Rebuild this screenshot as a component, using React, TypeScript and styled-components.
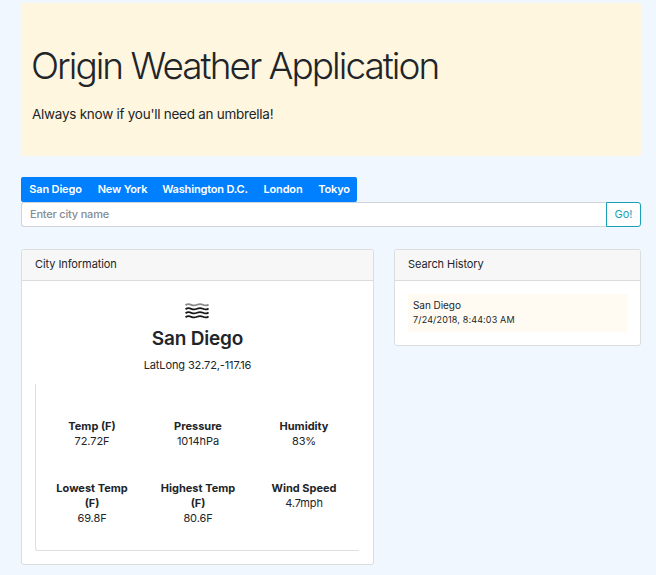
import React from "react";
import styled, { createGlobalStyle } from "styled-components";

const GlobalStyle = createGlobalStyle`
  * { box-sizing: border-box; }
  body {
    margin: 0;
    background: #f0f7ff;
    color: #212529;
    font-family: Inter, "Liberation Sans", sans-serif;
    font-size: 11px;
    line-height: 15px;
  }
  h1, h2, p, dl, dt, dd { margin: 0; }
`;

const Page = styled.main`
  width: 656px;
  height: 575px;
  overflow: hidden;
  padding: 3px 15px 0 21px;
`;

const Banner = styled.header`
  height: 153px;
  padding: 41px 11px 0;
  border-radius: 3px;
  background: #fff6df;
`;

const Title = styled.h1`
  margin-left: -1px;
  font-size: 37px;
  line-height: 44px;
  font-weight: 340;
  letter-spacing: -1.99px;
  white-space: nowrap;
`;

const Tagline = styled.p`
  margin-top: 16px;
  font-size: 13.5px;
  line-height: 21px;
  font-weight: 400;
  letter-spacing: -0.26px;
`;

const CityButtons = styled.nav`
  display: flex;
  width: 336px;
  margin-top: 21px;
  border-radius: 2px;
  overflow: hidden;
  background: #007fff;
`;

const CityButton = styled.button<{ $width: number }>`
  width: ${({ $width }) => $width}px;
  height: 25px;
  padding: 0;
  border: 0;
  background: transparent;
  color: #fff;
  font: 600 11px/25px Inter, sans-serif;
  letter-spacing: -0.17px;
  white-space: nowrap;
`;

const SearchBar = styled.form`
  display: flex;
  height: 25px;
`;

const SearchInput = styled.input`
  flex: 1;
  min-width: 0;
  padding: 0 8px;
  border: 1px solid #ced4da;
  border-right: 0;
  border-radius: 3px 0 0 3px;
  background: #fff;
  color: #495057;
  font: 500 11px/15px Inter, sans-serif;
  letter-spacing: -0.2px;
  &::placeholder { color: #858c93; opacity: 1; }
`;

const GoButton = styled.button`
  width: 35px;
  padding: 0;
  border: 1px solid #17a2b8;
  border-radius: 0 3px 3px 0;
  background: #fff;
  color: #17a2b8;
  font: 400 11px/15px Inter, sans-serif;
`;

const Columns = styled.div`
  display: grid;
  grid-template-columns: 353px 247px;
  gap: 20px;
  align-items: start;
  margin-top: 22px;
`;

const Card = styled.section`
  border: 1px solid #dcdddf;
  border-radius: 3px;
  background: #fff;
`;

const CardHeader = styled.header`
  height: 31px;
  padding: 7px 13px;
  border-bottom: 1px solid #dadbdc;
  border-radius: 2px 2px 0 0;
  background: #f7f7f7;
  letter-spacing: -0.08px;
`;

const CityBody = styled.div`
  height: 283px;
  padding: 22px 13px 0;
  text-align: center;
`;

const MistIcon = styled.svg`
  display: block;
  width: 24px;
  height: 16px;
  margin: 0 auto;
  transform: translateX(-1px);
`;

const CityName = styled.h2`
  margin-top: 8px;
  font-size: 19px;
  line-height: 24px;
  font-weight: 570;
  letter-spacing: -0.2px;
`;

const Coordinates = styled.p`
  margin-top: 7px;
  font-weight: 370;
  letter-spacing: -0.12px;
`;

const Readings = styled.dl`
  display: grid;
  grid-template-columns: repeat(3, 106px);
  grid-template-rows: 62px 1fr;
  width: 324px;
  height: 167px;
  margin-top: 11px;
  padding: 35px 0 0 3px;
  border-left: 1px solid #dfdfdf;
  border-bottom: 1px solid #dfdfdf;
  border-radius: 0 0 0 3px;
`;

const Reading = styled.div`
  padding: 0 13px;
`;

const ReadingLabel = styled.dt`
  font-weight: 650;
`;

const ReadingValue = styled.dd`
  font-weight: 370;
  letter-spacing: -0.1px;
`;

const HistoryBody = styled.div`
  padding: 13px;
`;

const HistoryEntry = styled.div`
  height: 38px;
  padding: 4px 5px;
  background: #fffaf2;
`;

const HistoryCity = styled.div`
  font-size: 10px;
  letter-spacing: -0.05px;
`;

const Timestamp = styled.time`
  display: block;
  font-size: 9px;
  line-height: 13px;
  letter-spacing: 0.15px;
`;

const cities = [
  { name: "San Diego", width: 69 },
  { name: "New York", width: 65 },
  { name: "Washington D.C.", width: 100 },
  { name: "London", width: 56 },
  { name: "Tokyo", width: 46 },
];

const readings = [
  ["Temp (F)", "72.72F"],
  ["Pressure", "1014hPa"],
  ["Humidity", "83%"],
  ["Lowest Temp (F)", "69.8F"],
  ["Highest Temp (F)", "80.6F"],
  ["Wind Speed", "4.7mph"],
];

const wave = "M0.5 2.2 C2.5 .8 4 .8 6.3 1.8 S10 2.8 12 1.8 S16 .8 18 1.8 S22 2.5 23.5 1.4";

export default function App() {
  return (
    <>
      <GlobalStyle />
      <Page>
        <Banner>
          <Title>Origin Weather Application</Title>
          <Tagline>Always know if you'll need an umbrella!</Tagline>
        </Banner>
        <CityButtons>
          {cities.map(({ name, width }) => (
            <CityButton key={name} $width={width}>{name}</CityButton>
          ))}
        </CityButtons>
        <SearchBar onSubmit={(event) => event.preventDefault()}>
          <SearchInput placeholder="Enter city name" />
          <GoButton>Go!</GoButton>
        </SearchBar>
        <Columns>
          <Card>
            <CardHeader>City Information</CardHeader>
            <CityBody>
              <MistIcon viewBox="0 0 24 16" fill="none" stroke="#181818" strokeWidth="1.8">
                <path d={wave} stroke="#888" />
                <path d={wave} transform="translate(0 4)" />
                <path d={wave} transform="translate(0 8)" />
                <path d={wave} transform="translate(0 12)" />
              </MistIcon>
              <CityName>San Diego</CityName>
              <Coordinates>LatLong 32.72,-117.16</Coordinates>
              <Readings>
                {readings.map(([label, value]) => (
                  <Reading key={label}>
                    <ReadingLabel>{label}</ReadingLabel>
                    <ReadingValue>{value}</ReadingValue>
                  </Reading>
                ))}
              </Readings>
            </CityBody>
          </Card>
          <Card>
            <CardHeader>Search History</CardHeader>
            <HistoryBody>
              <HistoryEntry>
                <HistoryCity>San Diego</HistoryCity>
                <Timestamp>7/24/2018, 8:44:03 AM</Timestamp>
              </HistoryEntry>
            </HistoryBody>
          </Card>
        </Columns>
      </Page>
    </>
  );
}
